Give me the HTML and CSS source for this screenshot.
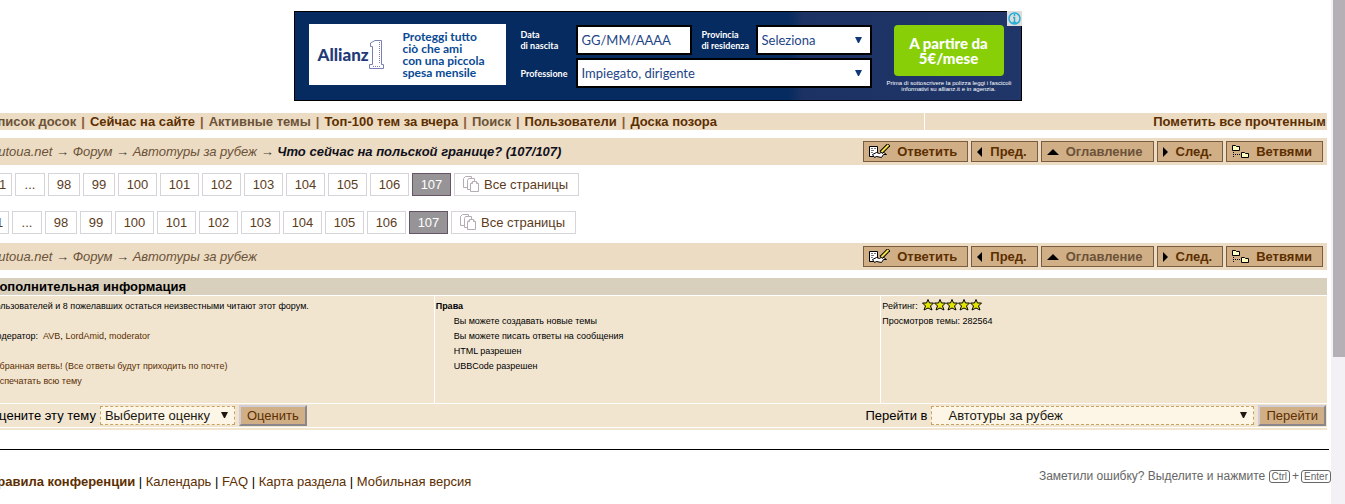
FILE: index.html
```
<!DOCTYPE html>
<html lang="ru">
  <head>
    <meta charset="UTF-8" />
    <meta name="viewport" content="width=device-width, initial-scale=1.0" />
    <title>Что сейчас на польской границе?</title>
    <link rel="stylesheet" href="styles.css">
  </head>
  <body>
    <svg class="sprite" aria-hidden="true">
      <symbol id="reply" viewBox="0 0 21 15">
        <path d="M.5 2.500h8v10h-8z" fill="#fff" stroke="#000" />
        <path d="M2 4.500h2M5 4.500h2M2 6.500h3M2 8.500h2" stroke="#777" />
        <path d="M3.500 10.500l4-2 3 1 3-2 4 3-3 0-2 3-5-1-2 1z" fill="#fff" stroke="#000" />
        <path d="M12 8.500L20 .5" stroke="#000" stroke-width="4" />
        <path d="M12.500 8L19.500 1" stroke="#f4e04a" stroke-width="2" />
      </symbol>
      <symbol id="prev" viewBox="0 0 6 10"><path d="M5 0v10L0 5z" /></symbol>
      <symbol id="up" viewBox="0 0 12 6"><path d="M0 6h12L6 0z" /></symbol>
      <symbol id="next" viewBox="0 0 6 10"><path d="M0 0v10L5 5z" /></symbol>
      <symbol id="tree" viewBox="0 0 17 14">
        <path d="M.5 5.500v-5h3l1 1h3v4zM9.500 12.500v-5h3l1 1h3v4z" fill="#ffffc0" stroke="#000" />
        <path d="M1.500 7v6M3 9.500h6" fill="none" stroke="#000" stroke-dasharray="1 1" />
      </symbol>
      <symbol id="pages" viewBox="0 0 17 17">
        <g fill="#fff" stroke="#b5acb5">
          <path d="M2.500.5h6v11h-8v-9z" /><path d="M5.500 2.500h6v11h-7v-9z" />
          <path d="M9.500 5.500h4l2 2v8h-8v-8z" /><path d="M7.500 7.500h2v-2M13.500 5.500v2h2" />
        </g>
      </symbol>
      <symbol id="star" viewBox="0 0 12 12">
        <path d="M6 .5l1.500 3.500h4l-3 3 1.500 4-4-2-4 2 1.500-4-3-3h4z" fill="#e4e400" stroke="#000" />
      </symbol>
    </svg>

    <div class="page">
      <div class="ad">
        <div class="banner">
          <div class="promo">
            <div class="brand">
              Allianz
              <svg width="16" height="30" viewBox="0 0 16 30">
                <path d="M1.500 6.500V3L6 .5h6.500v24h2v4H.5v-4h3v-18z" fill="#fff" stroke="#7a80b5" />
                <path d="M4 26.500h8M10.500 2v22" stroke="#7a80b5" stroke-dasharray="1 1" />
              </svg>
            </div>
            <p>Proteggi tutto<br>ciò che ami<br>con una piccola<br>spesa mensile</p>
          </div>
          <form class="quote">
            <label for="birth">Data<br>di nascita</label>
            <input id="birth" type="text" value="GG/MM/AAAA">
            <label class="second" for="province">Provincia<br>di residenza</label>
            <select id="province"><option>Seleziona</option></select>
            <label for="job">Professione</label>
            <select id="job"><option>Impiegato, dirigente</option></select>
          </form>
          <div class="offer">
            <button type="button">A partire da<br>5€/mese</button>
            <p>Prima di sottoscrivere la polizza leggi i fascicoli<br>informativi su allianz.it e in agenzia.</p>
          </div>
          <a class="adInfo" href="#" aria-label="AdChoices">
            <svg width="15" height="15" viewBox="0 0 15 15" fill="none" stroke="#25b0d8">
              <circle cx="7.500" cy="7.500" r="5.500" stroke-width="1.500" />
              <path d="M7.500 3v2M6 6.500h1.500v5M5.500 11.500h4" stroke-width="1.500" />
            </svg>
          </a>
        </div>
      </div>

      <nav class="topMenu">
        <div class="links">
          <a class="visited" href="#">Список досок</a> | <a href="#">Сейчас на сайте</a> |
          <a class="visited" href="#">Активные темы</a> | <a href="#">Топ-100 тем за вчера</a> |
          <a class="visited" href="#">Поиск</a> | <a href="#">Пользователи</a> | <a href="#">Доска позора</a>
        </div>
        <div class="mark"><a href="#">Пометить все прочтенным</a></div>
      </nav>

      <div class="bar">
        <div class="crumbs">
          <a href="#">autoua.net</a> → <a href="#">Форум</a> → <a href="#">Автотуры за рубеж</a> →
          <b>Что сейчас на польской границе? (107/107)</b>
        </div>
        <div class="tools">
          <a href="#"><svg width="21" height="15"><use href="#reply" /></svg>Ответить</a>
          <a href="#"><svg width="6" height="10"><use href="#prev" /></svg>Пред.</a>
          <a class="visited" href="#"><svg width="12" height="6"><use href="#up" /></svg>Оглавление</a>
          <a href="#"><svg width="6" height="10"><use href="#next" /></svg>След.</a>
          <a href="#"><svg width="17" height="14"><use href="#tree" /></svg>Ветвями</a>
        </div>
      </div>

      <div class="pager first">
        <a href="#">1</a><span>...</span><a href="#">98</a><a href="#">99</a>
        <a class="wide" href="#">100</a><a class="wide" href="#">101</a><a class="wide" href="#">102</a>
        <a class="wide" href="#">103</a><a class="wide" href="#">104</a><a class="wide" href="#">105</a>
        <a class="wide" href="#">106</a><span class="wide current">107</span>
        <a class="all" href="#"><svg width="17" height="17"><use href="#pages" /></svg>Все страницы</a>
      </div>
      <div class="pager">
        <a href="#">1</a><span>...</span><a href="#">98</a><a href="#">99</a>
        <a class="wide" href="#">100</a><a class="wide" href="#">101</a><a class="wide" href="#">102</a>
        <a class="wide" href="#">103</a><a class="wide" href="#">104</a><a class="wide" href="#">105</a>
        <a class="wide" href="#">106</a><span class="wide current">107</span>
        <a class="all" href="#"><svg width="17" height="17"><use href="#pages" /></svg>Все страницы</a>
      </div>

      <div class="bar">
        <div class="crumbs">
          <a href="#">autoua.net</a> → <a href="#">Форум</a> → <a href="#">Автотуры за рубеж</a>
        </div>
        <div class="tools">
          <a href="#"><svg width="21" height="15"><use href="#reply" /></svg>Ответить</a>
          <a href="#"><svg width="6" height="10"><use href="#prev" /></svg>Пред.</a>
          <a class="visited" href="#"><svg width="12" height="6"><use href="#up" /></svg>Оглавление</a>
          <a href="#"><svg width="6" height="10"><use href="#next" /></svg>След.</a>
          <a href="#"><svg width="17" height="14"><use href="#tree" /></svg>Ветвями</a>
        </div>
      </div>

      <div class="info">
        <h2>Дополнительная информация</h2>
        <div class="details">
          <div>
            <p>Пользователей и 8 пожелавших остаться неизвестными читают этот форум.</p>
            <br>
            <p>Модератор:&nbsp; <a href="#">AVB</a>, <a href="#">LordAmid</a>, <a href="#">moderator</a></p>
            <br>
            <p><a href="#">Избранная ветвь! (Все ответы будут приходить по почте)</a></p>
            <p><a href="#">Распечатать всю тему</a></p>
          </div>
          <div>
            <b>Права</b>
            <ul>
              <li>Вы можете создавать новые темы</li>
              <li>Вы можете писать ответы на сообщения</li>
              <li>HTML разрешен</li>
              <li>UBBCode разрешен</li>
            </ul>
          </div>
          <div>
            <p class="rating">Рейтинг:
              <span class="stars">
                <svg width="12" height="12"><use href="#star" /></svg><svg width="12" height="12"><use href="#star" /></svg><svg width="12" height="12"><use href="#star" /></svg><svg width="12" height="12"><use href="#star" /></svg><svg width="12" height="12"><use href="#star" /></svg>
              </span>
            </p>
            <p>Просмотров темы: 282564</p>
          </div>
        </div>
        <div class="actions">
          <form>
            <label for="rate">Оцените эту тему</label>
            <select id="rate" class="rate"><option>Выберите оценку</option></select>
            <button type="button">Оценить</button>
          </form>
          <form>
            <label for="jump">Перейти в</label>
            <select id="jump" class="jump"><option>Автотуры за рубеж</option></select>
            <button type="button">Перейти</button>
          </form>
        </div>
      </div>

      <hr>
      <footer>
        <div class="footLinks">
          <a href="#"><b>Правила конференции</b></a> | <a href="#">Календарь</a> | <a href="#">FAQ</a> |
          <a href="#">Карта раздела</a> | <a href="#">Мобильная версия</a>
        </div>
        <div class="mistake">Заметили ошибку? Выделите и нажмите <kbd>Ctrl</kbd>+<kbd>Enter</kbd></div>
      </footer>
    </div>
    <div class="scrollbar"><div class="thumb"></div></div>
  </body>
</html>
```
FILE: styles.css
```
* {
  box-sizing: border-box;
}
body {
  margin: 0;
  height: 100vh;
  display: flex;
  overflow: hidden;
  background: #fff;
  color: #000;
  font: 13px/17px Arial, "Liberation Sans", sans-serif;
}
a {
  color: #5c2e00;
  text-decoration: none;
}
a.visited,
.crumbs a {
  color: #6b5238;
}
p,
ul,
h2 {
  margin: 0;
  padding: 0;
}
.sprite {
  display: none;
}
/* the page is scrolled a little to the right */
.page {
  flex: 1;
  min-width: 0;
  margin-left: -12px;
  padding-top: 11px;
}
.scrollbar {
  width: 14px;
  padding-left: 2px;
  background: #f3f1f5;
}
.thumb {
  height: 357px;
  background: #b4b0b6;
}

.ad {
  display: flex;
  justify-content: center;
  margin: 0 4px 12px 0;
}
.banner {
  position: relative;
  display: flex;
  width: 728px;
  height: 90px;
  border: 1px solid #000;
  background: linear-gradient(90deg, #062b60 68%, #1c3264 70%, #203568);
  color: #fff;
  font-family: Lato, sans-serif;
}
.promo {
  display: flex;
  align-items: center;
  width: 197px;
  height: 61px;
  margin: 12px 0 0 14px;
  padding-left: 9px;
  background: #fff;
  color: #0a4a94;
}
.promo p {
  font-size: 12px;
  line-height: 12px;
  font-weight: bold;
}
.brand {
  display: flex;
  align-items: center;
  width: 85px;
  color: #233a78;
  font-size: 17px;
  font-weight: 900;
}
.quote {
  display: grid;
  grid-template-columns: 55px 116px 64px 116px;
  grid-template-rows: 30px 30px;
  gap: 3px 0;
  margin: 13px 0 0 15px;
  align-items: center;
}
.quote label {
  font-size: 9px;
  line-height: 11px;
  font-weight: bold;
}
.quote .second {
  padding-left: 10px;
  white-space: nowrap;
}
#province,
#birth,
#job {
  width: 100%;
  height: 30px;
  border: 2px solid #000;
  border-radius: 0;
  padding: 0 4px;
  color: #1d4585;
  background-color: #fff;
  font: 13px Lato, sans-serif;
}
#province,
#job,
.rate,
.jump {
  appearance: none;
  background-image: url("data:image/svg+xml,%3Csvg xmlns='http://www.w3.org/2000/svg' width='7' height='7'%3E%3Cpath d='M0 0h7L4 6H3z' fill='%23201810'/%3E%3C/svg%3E");
  background-repeat: no-repeat;
  background-position: right 6px center;
}
#province,
#job {
  background-image: url("data:image/svg+xml,%3Csvg xmlns='http://www.w3.org/2000/svg' width='7' height='7'%3E%3Cpath d='M0 0h7L4 6H3z' fill='%23103878'/%3E%3C/svg%3E");
  background-position: right 8px center;
}
#job {
  grid-column: span 3;
}
.offer {
  width: 124px;
  margin: 13px 0 0 15px;
  text-align: center;
}
.offer button {
  width: 110px;
  height: 51px;
  border: 0;
  border-radius: 4px;
  padding: 0;
  background: #88cf08;
  color: #fff;
  font: 900 15px/15px Lato, sans-serif;
}
.offer p {
  margin-top: 4px;
  font: 6px/6px Arial, "Liberation Sans", sans-serif;
  white-space: nowrap;
}
.adInfo {
  position: absolute;
  top: -1px;
  right: -1px;
  width: 15px;
  height: 15px;
  background: #ddd;
}
.adInfo svg {
  display: block;
}

.topMenu {
  display: flex;
  margin-right: 4px;
  font-weight: bold;
  color: #8a5a38;
}
.topMenu div,
.bar {
  background: #ecdcc3;
}
.topMenu .links {
  display: flex;
  gap: 5px;
  width: 70%;
  border-right: 1px solid #fff;
}
.mark {
  flex: 1;
  padding-right: 1px;
  text-align: right;
}
.bar {
  display: flex;
  justify-content: space-between;
  align-items: center;
  height: 27px;
  margin: 8px 4px 0 0;
  padding: 0 4px 0 3px;
}
.pager + .bar {
  margin-top: 9px;
}
.crumbs {
  font-style: italic;
  color: #4a4038;
}
.crumbs b {
  color: #10101c;
}
.tools {
  display: flex;
  gap: 3px;
}
.tools a {
  display: flex;
  align-items: center;
  gap: 7px;
  height: 21px;
  padding: 0 10px 0 5px;
  border: 1px solid #7b5c3e;
  background: #d0ae86;
  font-weight: bold;
}

.pager {
  display: flex;
  gap: 3px;
  margin-top: 15px;
  padding-left: 2px;
}
.pager.first {
  margin-top: 8px;
  padding-left: 5px;
}
.pager a,
.pager span {
  display: flex;
  align-items: center;
  justify-content: center;
  min-width: 32px;
  height: 23px;
  border: 1px solid #d6d4d8;
  color: #5c3c1c;
}
.pager a:first-child {
  min-width: 19px;
}
.pager span {
  min-width: 30px;
}
.pager .wide {
  min-width: 39px;
}
.pager .current {
  border: 1px solid #665566;
  background: #969496;
  color: #fff;
}
.pager .all {
  gap: 4px;
  padding: 0 10px 0 8px;
}

.info {
  margin: 8px 4px 0 0;
  border-bottom: 2px solid #f1e5d0;
}
.info h2 {
  padding-left: 2px;
  background: #d8cfbd;
  font-size: 13px;
  line-height: 17px;
}
.details {
  display: grid;
  grid-template-columns: 1fr 1fr 1fr;
  gap: 1px;
  margin: 1px 0;
  font-size: 9px;
  line-height: 15px;
}
.details > div {
  min-height: 107px;
  padding: 3px 0 0 1px;
  background: #f1e5d0;
}
.details ul {
  padding-left: 18px;
  list-style: none;
}
.rating {
  display: flex;
  gap: 4px;
}
.stars {
  display: flex;
}
.actions {
  display: flex;
  justify-content: space-between;
  margin-bottom: 1px;
  background: #f1e5d0;
}
.actions form {
  display: flex;
  align-items: center;
  gap: 4px;
  height: 23px;
  padding: 0 1px;
}
.actions select {
  height: 19px;
  border: 1px dashed #c8a464;
  padding: 0 4px;
  background-color: #fdf6e6;
  color: #201810;
  font: inherit;
}
.actions .rate {
  width: 135px;
}
.actions .jump {
  width: 323px;
  padding-left: 16px;
}
.actions button {
  height: 21px;
  border: 2px solid;
  border-color: #d2ccd6 #8a868c #8a868c #d2ccd6;
  padding: 0 6px;
  background: #d0ae86;
  color: #5c2e00;
  font: inherit;
}
hr {
  margin: 19px 2px 0 0;
  border: 0;
  border-top: 1px solid #000;
}
footer {
  display: flex;
  justify-content: space-between;
  margin-top: 18px;
}
.footLinks {
  padding-top: 5px;
}
.mistake {
  color: #666;
  font-size: 12px;
}
kbd {
  padding: 0 2px;
  border: 1px solid #666;
  border-radius: 3px;
  font: 10px Arial, "Liberation Sans", sans-serif;
}
kbd:first-child {
  margin-right: 2px;
}
kbd:last-child {
  margin-left: 2px;
}
```
